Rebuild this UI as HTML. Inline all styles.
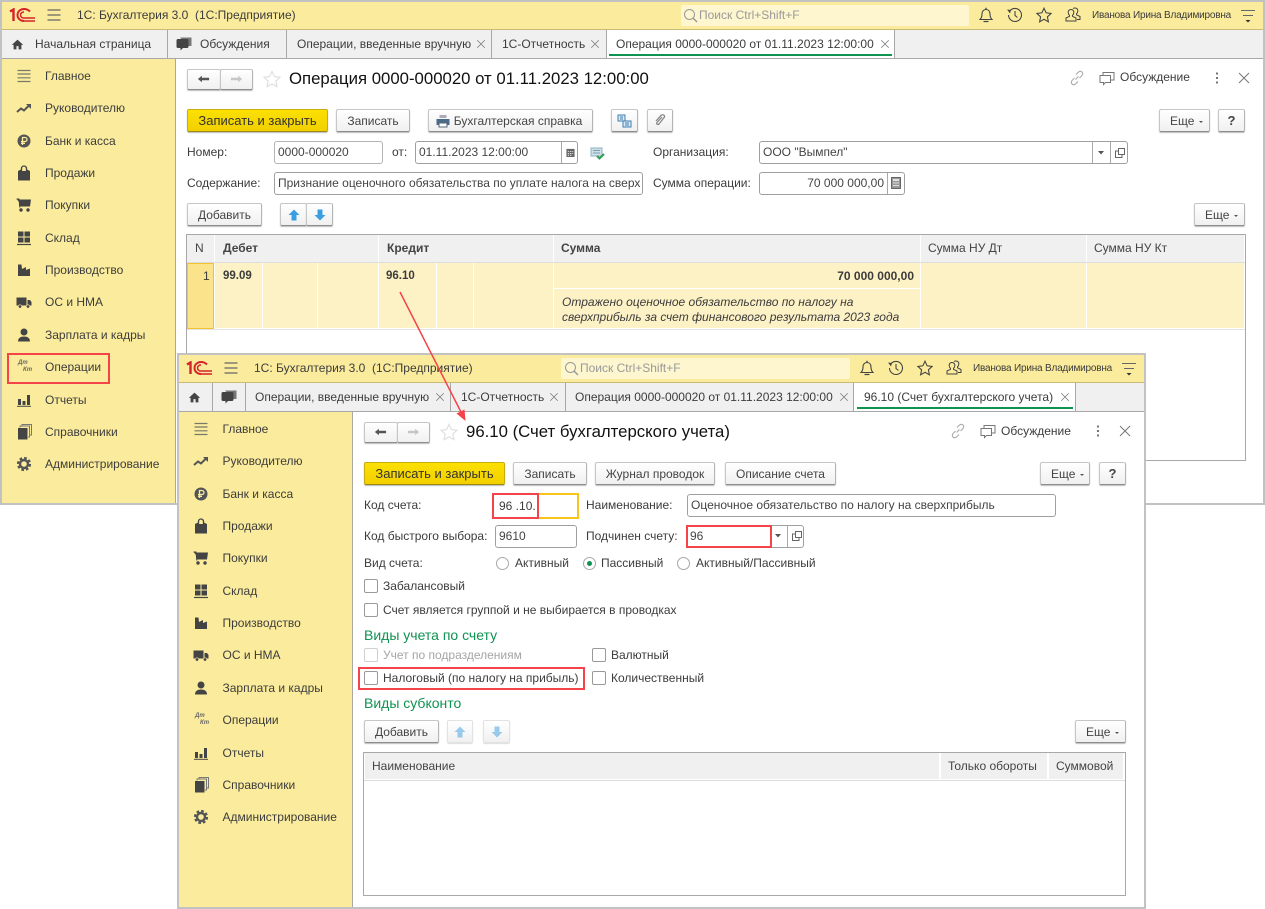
<!DOCTYPE html>
<html lang="ru"><head><meta charset="utf-8"><title>1С</title>
<style>
html,body{margin:0;padding:0;background:#fff}
body{width:1265px;height:909px;position:relative;overflow:hidden;font:12px/14px "Liberation Sans",Arial,sans-serif;color:#3c3c3c}
div,span,svg{position:absolute;box-sizing:border-box}
span{white-space:nowrap}
.w{background:#fff;border:2px solid #c2c2c2}
.h{background:#fbec9d}
.tb{background:#f0f0f0}
.l{background:#a8a8a8}
.b{border:1px solid #c6c6c6;border-bottom-color:#8d8d8d;border-right-color:#b5b5b5;border-radius:2px;background:linear-gradient(#fff,#f0f0f0);box-shadow:0 1px 1px #bbb;text-align:center;line-height:22px;white-space:nowrap;color:#444}
.y{background:linear-gradient(#fbe000,#f2d000);border-color:#c9ad10;border-bottom-color:#9c8a10;color:#333;font-size:13px}
.d{border-color:#e2e2e2;box-shadow:0 1px 1px #ddd}
.m{text-align:left;padding-left:10px}
.ca{position:static;display:inline-block;border-left:2px solid transparent;border-right:2px solid transparent;border-top:2px solid #555;margin-left:5px;vertical-align:middle}
.i{border:1px solid #b4b4b4;border-radius:3px;background:#fff;line-height:21px;padding-left:3px;white-space:nowrap;overflow:hidden;color:#444}
.c{width:14px;height:14px;border:1px solid #9a9a9a;border-radius:2px;background:#fff}
.r{width:13px;height:13px;border:1px solid #a8a8a8;border-radius:50%;background:#fff}
.sec{font-size:14px;color:#0e9350}
.red{border:2px solid #f4444a;background:transparent}
.g{color:#a5a5a5}
.dk{font:italic bold 6px/7px "Liberation Sans",sans-serif;color:#666}
.nm{font-size:10px;letter-spacing:-.2px}
.ti{font-size:16.750px;line-height:20px;color:#111}
.cell{background:#fdf1c6}
.th{background:#f0f0f0;line-height:26px;padding-left:8px;color:#444;white-space:nowrap}
svg{overflow:visible}
</style></head><body>
<svg width="0" height="0" style="left:0;top:0">
<defs>
<symbol id="menu" viewBox="0 0 16 16"><path d="M1.500 2.500h13M1.500 6h13M1.500 9.800h13M1.500 13.500h13" stroke="#77776a" stroke-width="1.200" fill="none"/></symbol>
<symbol id="ham" viewBox="0 0 16 16"><path d="M1.500 3h13M1.500 8h13M1.500 13h13" stroke="#666" stroke-width="1.300" fill="none"/></symbol>
<symbol id="trend" viewBox="0 0 16 16"><path d="M1 12l4-3.500 3 2 5-5" stroke="#555" stroke-width="2" fill="none"/><path d="M10 4h5v5z" fill="#555"/></symbol>
<symbol id="coin" viewBox="0 0 16 16"><circle cx="8" cy="8" r="6.500" fill="#555"/><path d="M6.500 12V4.500h2.500a2 2 0 010 4H5M5 10.300h4" stroke="#fbec9d" stroke-width="1.300" fill="none"/></symbol>
<symbol id="bag" viewBox="0 0 16 16"><path d="M2 6h12v9.500H2z" fill="#444"/><path d="M5.500 8V3.500a2.500 2.500 0 015 0V8" stroke="#444" stroke-width="1.300" fill="none"/><path d="M2 6l3-1.500v1.500zM14 6l-3-1.500v1.500z" fill="#444"/></symbol>
<symbol id="cart" viewBox="0 0 16 16"><path d="M1 2.500h14l-1 7H3.500L3 5z" fill="#444"/><path d="M.5 2h2.500l.8 8.500" stroke="#444" fill="none"/><circle cx="5" cy="13" r="1.700" fill="#444"/><circle cx="12" cy="13" r="1.700" fill="#444"/></symbol>
<symbol id="grid" viewBox="0 0 16 16"><path d="M2 1.500h5.500v5H2zM8.500 1.500H14v5H8.500zM2 7.500h5.500v5H2zM8.500 7.500H14v5H8.500z" fill="#444"/><path d="M1 14.500h14" stroke="#444" stroke-width="1.200"/></symbol>
<symbol id="fact" viewBox="0 0 16 16"><path d="M2 14V2.500h3.500L6 7l4-2v3l4-1.500V14z" fill="#444"/></symbol>
<symbol id="truck" viewBox="0 0 16 16"><path d="M0.500 3.500h10v8h-10zM11.500 6h2.500l1.500 2v3.500h-4z" fill="#444"/><circle cx="4" cy="12.500" r="1.700" fill="#444" stroke="#fbec9d" stroke-width=".6"/><circle cx="12" cy="12.500" r="1.700" fill="#444" stroke="#fbec9d" stroke-width=".6"/></symbol>
<symbol id="user" viewBox="0 0 16 16"><circle cx="8" cy="5" r="3.500" fill="#444"/><path d="M2 14.500c0-3.500 2.500-5 6-5s6 1.500 6 5z" fill="#444"/></symbol>
<symbol id="chart" viewBox="0 0 16 16"><path d="M2 7h3v6H2zM6.500 9h3v4h-3zM11 3h3v10h-3z" fill="#444"/><path d="M1 14.300h14" stroke="#444"/></symbol>
<symbol id="book" viewBox="0 0 16 16"><path d="M2 4h9.500v11.500H2z" fill="#444"/><path d="M4 3.500V2h9.500v11H12M6 1.500V.5h9.500v10.500H14" stroke="#777" fill="none"/></symbol>
<symbol id="gear" viewBox="0 0 16 16"><circle cx="8" cy="8" r="4" fill="none" stroke="#555" stroke-width="2.400"/><circle cx="8" cy="8" r="6" fill="none" stroke="#555" stroke-width="2.200" stroke-dasharray="2.700 2"/></symbol>
<symbol id="home" viewBox="0 0 16 16"><path d="M8 2L1 8.500h2.200V14h3.500v-4h2.600v4h3.500V8.500H15z" fill="#444"/></symbol>
<symbol id="chat" viewBox="0 0 16 16"><path d="M4 1.500h11.500v8.500H12z" fill="#777"/><path d="M.5 4.500C.5 3.500 1 3 2 3h9c1 0 1.500.5 1.500 1.500v6c0 1-.5 1.500-1.500 1.500H7l-2.500 2.500V12H2C1 12 .5 11.500.5 10.500z" fill="#444"/></symbol>
<symbol id="chat2" viewBox="0 0 16 16"><path d="M1 5.500h10.500v7H6.500l-2 2v-2H1z" fill="#fff" stroke="#777"/><path d="M4 5V2.500h11V10h-3" fill="none" stroke="#777"/></symbol>
<symbol id="bell" viewBox="0 0 16 16"><path d="M2 12.500c1.500-1.500 2-3 2-5.500 0-3 1.800-4.500 4-4.500s4 1.500 4 4.500c0 2.500.5 4 2 5.500z" fill="none" stroke="#444" stroke-width="1.100"/><path d="M8 .8v1.700M5.500 14.500h5" stroke="#444" stroke-width="1.300"/></symbol>
<symbol id="hist" viewBox="0 0 16 16"><path d="M2.500 4.500A6.500 6.500 0 111.500 8" fill="none" stroke="#444" stroke-width="1.100"/><path d="M0 2.500l4 .5-1 3.500z" fill="#444"/><path d="M8 4v4.500l2.500 2" fill="none" stroke="#444" stroke-width="1.100"/></symbol>
<symbol id="star" viewBox="0 0 16 16"><path d="M8 1.200l2.100 4.600 5 .6-3.700 3.400 1 5L8 12.300l-4.400 2.500 1-5L.9 6.400l5-.6z" fill="none" stroke="#444" stroke-width="1.100"/></symbol>
<symbol id="star2" viewBox="0 0 16 16"><path d="M8 1.200l2.100 4.600 5 .6-3.700 3.400 1 5L8 12.300l-4.400 2.500 1-5L.9 6.400l5-.6z" fill="#fff" stroke="#dedede" stroke-width="1"/></symbol>
<symbol id="ppl" viewBox="0 0 16 16"><path d="M6 2.500c-2 0-3 1.500-2.800 3.300.1 1 .6 2 1.300 2.500v1L1 11v3h10v-3L7.500 9.300v-1c.7-.5 1.200-1.500 1.300-2.500C9 4 8 2.500 6 2.500z" fill="none" stroke="#444"/><path d="M8 1.500c.6-.4 1.300-.6 2-.5 2 0 3 1.500 2.800 3.300-.1 1-.6 2-1.300 2.500v1l3.500 1.700v3h-3" fill="none" stroke="#444"/></symbol>
<symbol id="rm" viewBox="0 0 16 16"><path d="M1 2.500h14M3 7.500h10" stroke="#666" fill="none"/><path d="M5.500 12h5L8 14.500z" fill="#333"/></symbol>
<symbol id="logo" viewBox="0 0 26 14"><path d="M1 3.500L4.500 1.500V13" fill="none" stroke="#d5232b" stroke-width="2.400"/><path d="M21 3.500C19.500 2 17.500 1 15 1 11.500 1 8.500 3.500 8.500 7s3 6 6.500 6" fill="none" stroke="#d5232b" stroke-width="2"/><path d="M15 4c-2 0-3.500 1.300-3.500 3s1.500 3 3.500 3h11M15 13h11" fill="none" stroke="#d5232b" stroke-width="1.500"/></symbol>
<symbol id="link" viewBox="0 0 16 16"><path d="M6.500 9.500l3-3M7 4.500l2-2c1.500-1.500 3-1.500 4-.5s1 2.500-.5 4l-2 2M9 11.500l-2 2c-1.500 1.500-3 1.500-4 .5s-1-2.500.5-4l2-2" fill="none" stroke="#aaa" stroke-width="1.100"/></symbol>
<symbol id="xx" viewBox="0 0 16 16"><path d="M3 3l10 10M13 3L3 13" stroke="#777" stroke-width="1"/></symbol>
<symbol id="dots" viewBox="0 0 16 16"><path d="M8 2.500v2M8 7v2M8 11.500v2" stroke="#666" stroke-width="1.800"/></symbol>
<symbol id="back" viewBox="0 0 16 10"><path d="M1 5l5-4v2.500h9v3H6V9z" fill="#555"/></symbol>
<symbol id="fwd" viewBox="0 0 16 10"><path d="M15 5l-5-4v2.500H1v3h9V9z" fill="#c6c6c6"/></symbol>
<symbol id="up" viewBox="0 0 12 12"><path d="M6 .5L11.500 6H8.500v5.500h-5V6H.5z" fill="#3b9ee0"/></symbol>
<symbol id="dn" viewBox="0 0 12 12"><path d="M6 11.500L.5 6h3V.5h5V6h3z" fill="#3b9ee0"/></symbol>
<symbol id="open" viewBox="0 0 10 10"><path d="M3.500.5h6v6h-6zM3 3H.5v6.500H7V7" fill="none" stroke="#666"/></symbol>
<symbol id="cal" viewBox="0 0 10 10"><path d="M.5 1h9v9h-9z" fill="#666"/><path d="M2 4h1.500M4.500 4H6M7 4h1M2 6h1.500M4.500 6H6M7 6h1M2 8h1.500M4.500 8H6" stroke="#fff" stroke-width=".9"/></symbol>
<symbol id="calc" viewBox="0 0 10 12"><path d="M.5.500h9v11h-9z" fill="#999" stroke="#666"/><path d="M2 3h6" stroke="#fff" stroke-width="1.400"/><path d="M2 6h6M2 8.500h6" stroke="#ddd"/></symbol>
</defs></svg>

<!-- WINDOW 1 -->
<div class="w" style="left:0;top:0;width:1265px;height:505px"></div>
<div class="h" style="left:2px;top:2px;width:1261px;height:28px;border-bottom:1px solid #c9bb74"></div>
<svg style="left:9px;top:8px" width="26" height="14"><use href="#logo"/></svg>
<svg style="left:46px;top:7px" width="16" height="16"><use href="#ham"/></svg>
<span style="left:77px;top:8px">1С: Бухгалтерия 3.0&nbsp; (1С:Предприятие)</span>
<div style="left:681px;top:5px;width:288px;height:21px;background:#fdf6cf;border-radius:2px"></div>
<svg style="left:683px;top:8px" width="15" height="15" viewBox="0 0 15 15"><circle cx="6.500" cy="6.500" r="5" fill="none" stroke="#999"/><path d="M10 10l4 4" stroke="#999" stroke-width="1.500"/></svg>
<span style="left:699px;top:8px;color:#999">Поиск Ctrl+Shift+F</span>
<svg style="left:978px;top:7px" width="16" height="16"><use href="#bell"/></svg>
<svg style="left:1007px;top:7px" width="16" height="16"><use href="#hist"/></svg>
<svg style="left:1036px;top:7px" width="16" height="16"><use href="#star"/></svg>
<svg style="left:1065px;top:7px" width="16" height="16"><use href="#ppl"/></svg>
<span class="nm" style="left:1092px;top:9px">Иванова Ирина Владимировна</span>
<svg style="left:1240px;top:8px" width="16" height="16"><use href="#rm"/></svg>
<!-- tabs 1 -->
<div class="tb" style="left:2px;top:30px;width:1261px;height:29px;border-bottom:1px solid #a8a8a8"></div>
<div class="l" style="left:167px;top:30px;width:1px;height:28px"></div>
<div class="l" style="left:286px;top:30px;width:1px;height:28px"></div>
<div class="l" style="left:491px;top:30px;width:1px;height:28px"></div>
<div class="l" style="left:606px;top:30px;width:1px;height:28px"></div>
<div style="left:607px;top:30px;width:287px;height:28px;background:#fff"></div>
<div class="l" style="left:894px;top:30px;width:1px;height:28px"></div>
<div style="left:609px;top:54px;width:283px;height:2px;background:#0e9350"></div>
<svg style="left:11px;top:38px" width="13" height="13"><use href="#home"/></svg>
<span style="left:35px;top:37px">Начальная страница</span>
<svg style="left:176px;top:36px" width="16" height="16"><use href="#chat"/></svg>
<span style="left:200px;top:37px">Обсуждения</span>
<span style="left:297px;top:37px">Операции, введенные вручную</span>
<svg style="left:475px;top:38px" width="12" height="12"><use href="#xx"/></svg>
<span style="left:502px;top:37px">1С-Отчетность</span>
<svg style="left:589px;top:38px" width="12" height="12"><use href="#xx"/></svg>
<span style="left:616px;top:37px">Операция 0000-000020 от 01.11.2023 12:00:00</span>
<svg style="left:879px;top:38px" width="12" height="12"><use href="#xx"/></svg>
<!-- sidebar 1 -->
<div class="h" style="left:2px;top:59px;width:174px;height:444px;border-right:1px solid #a9a9a0"></div>
<svg style="left:16px;top:68px" width="16" height="16"><use href="#menu"/></svg><span style="left:45px;top:69px">Главное</span>
<svg style="left:16px;top:100px" width="16" height="16"><use href="#trend"/></svg><span style="left:45px;top:101px">Руководителю</span>
<svg style="left:16px;top:133px" width="16" height="16"><use href="#coin"/></svg><span style="left:45px;top:134px">Банк и касса</span>
<svg style="left:16px;top:165px" width="16" height="16"><use href="#bag"/></svg><span style="left:45px;top:166px">Продажи</span>
<svg style="left:16px;top:197px" width="16" height="16"><use href="#cart"/></svg><span style="left:45px;top:198px">Покупки</span>
<svg style="left:16px;top:230px" width="16" height="16"><use href="#grid"/></svg><span style="left:45px;top:231px">Склад</span>
<svg style="left:16px;top:262px" width="16" height="16"><use href="#fact"/></svg><span style="left:45px;top:263px">Производство</span>
<svg style="left:16px;top:294px" width="16" height="16"><use href="#truck"/></svg><span style="left:45px;top:295px">ОС и НМА</span>
<svg style="left:16px;top:327px" width="16" height="16"><use href="#user"/></svg><span style="left:45px;top:328px">Зарплата и кадры</span>
<span class="dk" style="left:18px;top:360px">Дт</span><span class="dk" style="left:23px;top:367px">Кт</span><span style="left:45px;top:360px">Операции</span>
<svg style="left:16px;top:392px" width="16" height="16"><use href="#chart"/></svg><span style="left:45px;top:393px">Отчеты</span>
<svg style="left:16px;top:424px" width="16" height="16"><use href="#book"/></svg><span style="left:45px;top:425px">Справочники</span>
<svg style="left:16px;top:456px" width="16" height="16"><use href="#gear"/></svg><span style="left:45px;top:457px">Администрирование</span>
<div class="red" style="left:7px;top:353px;width:103px;height:31px"></div>
<!-- content 1 -->
<div class="b" style="left:187px;top:69px;width:34px;height:21px"></div><div class="b" style="left:220px;top:69px;width:33px;height:21px"></div>
<svg style="left:197px;top:75px" width="13" height="8"><use href="#back"/></svg>
<svg style="left:230px;top:75px" width="13" height="8"><use href="#fwd"/></svg>
<svg style="left:263px;top:70px" width="18" height="18"><use href="#star2"/></svg>
<span class="ti" style="left:289px;top:69px">Операция 0000-000020 от 01.11.2023 12:00:00</span>
<svg style="left:1069px;top:70px" width="16" height="16"><use href="#link"/></svg>
<svg style="left:1099px;top:70px" width="16" height="16"><use href="#chat2"/></svg>
<span style="left:1120px;top:70px">Обсуждение</span>
<svg style="left:1209px;top:70px" width="16" height="16"><use href="#dots"/></svg>
<svg style="left:1236px;top:70px" width="16" height="16"><use href="#xx"/></svg>
<div class="b y" style="left:187px;top:109px;width:141px;height:23px">Записать и закрыть</div>
<div class="b" style="left:336px;top:109px;width:74px;height:23px">Записать</div>
<div class="b" style="left:428px;top:109px;width:165px;height:23px;padding-left:15px">Бухгалтерская справка</div>
<svg style="left:436px;top:114px" width="14" height="14" viewBox="0 0 14 14"><path d="M3.500 1h7v3h-7z" fill="#aab"/><path d="M.5 5h13v6h-13z" fill="#4a6a8a"/><path d="M3 9h8v4H3z" fill="#fff" stroke="#567"/></svg>
<div class="b" style="left:611px;top:109px;width:27px;height:23px"></div>
<svg style="left:617px;top:114px" width="15" height="14" viewBox="0 0 15 14"><path d="M1 1h7v6H1zM6 7h8v6H6z" fill="#dbe9f5" stroke="#3f7fb0"/><path d="M3 3h3M3 5h3M8 9h4M8 11h4" stroke="#3f7fb0"/></svg>
<div class="b" style="left:647px;top:109px;width:26px;height:23px"></div>
<svg style="left:653px;top:113px" width="14" height="14" viewBox="0 0 14 14"><path d="M3 8l5-5.500c1.500-1.500 4-.5 3.500 1.500L6 11c-1.200 1.200-3 0-2-1.500L9 4" fill="none" stroke="#888" stroke-width="1.300"/></svg>
<div class="b m" style="left:1159px;top:109px;width:51px;height:23px">Еще<span class="ca"></span></div>
<div class="b" style="left:1218px;top:109px;width:27px;height:23px;font-weight:bold;font-size:13px">?</div>
<span style="left:187px;top:145px">Номер:</span>
<div class="i" style="left:274px;top:141px;width:109px;height:23px">0000-000020</div>
<span style="left:392px;top:145px">от:</span>
<div class="i" style="left:415px;top:141px;width:163px;height:23px;border-color:#a0a0a0">01.11.2023 12:00:00</div>
<div class="l" style="left:561px;top:142px;width:1px;height:21px"></div>
<svg style="left:566px;top:148px" width="9" height="9"><use href="#cal"/></svg>
<svg style="left:590px;top:147px" width="15" height="13" viewBox="0 0 15 13"><path d="M1 1h11v8H1z" fill="#cfe0ea" stroke="#8fb0c0"/><path d="M3 3.500h7M3 6h7" stroke="#7f9fb0"/><path d="M7 9l2.500 2.500L14 7" fill="none" stroke="#2aa050" stroke-width="2"/></svg>
<span style="left:653px;top:145px">Организация:</span>
<div class="i" style="left:759px;top:141px;width:369px;height:23px;border-color:#a0a0a0">ООО "Вымпел"</div>
<div class="l" style="left:1092px;top:142px;width:1px;height:21px"></div>
<div class="l" style="left:1110px;top:142px;width:1px;height:21px"></div>
<svg style="left:1098px;top:151px" width="6" height="4" viewBox="0 0 6 4"><path d="M0 0h6L3 3.500z" fill="#555"/></svg>
<svg style="left:1115px;top:148px" width="10" height="10"><use href="#open"/></svg>
<span style="left:187px;top:176px">Содержание:</span>
<div class="i" style="left:274px;top:172px;width:369px;height:23px;border-color:#a0a0a0">Признание оценочного обязательства по уплате налога на сверх</div>
<span style="left:653px;top:176px">Сумма операции:</span>
<div class="i" style="left:759px;top:172px;width:146px;height:23px;border-color:#a0a0a0;text-align:right;padding-right:20px">70 000 000,00</div>
<div class="l" style="left:887px;top:173px;width:1px;height:21px"></div>
<svg style="left:891px;top:177px" width="10" height="12"><use href="#calc"/></svg>
<div class="b" style="left:187px;top:203px;width:75px;height:23px">Добавить</div>
<div class="b" style="left:280px;top:203px;width:27px;height:23px"></div><div class="b" style="left:306px;top:203px;width:27px;height:23px"></div>
<svg style="left:288px;top:209px" width="12" height="12"><use href="#up"/></svg>
<svg style="left:314px;top:209px" width="12" height="12"><use href="#dn"/></svg>
<div class="b m" style="left:1194px;top:203px;width:51px;height:23px">Еще<span class="ca"></span></div>
<!-- table 1 -->
<div style="left:186px;top:234px;width:1060px;height:227px;border:1px solid #a8a8a8;background:#fff"></div>
<div class="th" style="left:187px;top:235px;width:27px;height:27px;padding-left:8px">N</div>
<div class="th" style="left:215px;top:235px;width:163px;height:27px;font-weight:bold">Дебет</div>
<div class="th" style="left:379px;top:235px;width:174px;height:27px;font-weight:bold">Кредит</div>
<div class="th" style="left:554px;top:235px;width:366px;height:27px;font-weight:bold;padding-left:7px">Сумма</div>
<div class="th" style="left:921px;top:235px;width:165px;height:27px;padding-left:7px">Сумма НУ Дт</div>
<div class="th" style="left:1087px;top:235px;width:157px;height:27px;padding-left:7px">Сумма НУ Кт</div>
<div style="left:187px;top:262px;width:1058px;height:1px;background:#ddd"></div>
<div style="left:187px;top:263px;width:27px;height:66px;background:#fbe38c;border:1px solid #f2c230"></div>
<span style="left:203px;top:269px;font-size:12px">1</span>
<div class="cell" style="left:215px;top:263px;width:47px;height:65px"></div>
<div class="cell" style="left:263px;top:263px;width:54px;height:65px"></div>
<div class="cell" style="left:318px;top:263px;width:60px;height:65px"></div>
<div class="cell" style="left:379px;top:263px;width:57px;height:65px"></div>
<div class="cell" style="left:437px;top:263px;width:36px;height:65px"></div>
<div class="cell" style="left:474px;top:263px;width:79px;height:65px"></div>
<div class="cell" style="left:554px;top:263px;width:366px;height:25px"></div>
<div class="cell" style="left:554px;top:289px;width:366px;height:39px"></div>
<div class="cell" style="left:921px;top:263px;width:165px;height:65px"></div>
<div class="cell" style="left:1087px;top:263px;width:157px;height:65px"></div>
<div style="left:187px;top:329px;width:1058px;height:1px;background:#e2e2e2"></div>
<span style="left:223px;top:269px;font-weight:bold;font-size:11.500px">99.09</span>
<span style="left:386px;top:269px;font-weight:bold;font-size:11.500px">96.10</span>
<span style="right:351px;top:269px;font-weight:bold;font-size:12px">70 000 000,00</span>
<span style="left:562px;top:295px;font-style:italic">Отражено оценочное обязательство по налогу на</span>
<span style="left:562px;top:310px;font-style:italic">сверхприбыль за счет финансового результата 2023 года</span>

<!-- WINDOW 2 -->
<div class="w" style="left:177px;top:353px;width:969px;height:556px"></div>
<div class="h" style="left:179px;top:355px;width:965px;height:28px;border-bottom:1px solid #c9bb74"></div>
<svg style="left:186px;top:361px" width="26" height="14"><use href="#logo"/></svg>
<svg style="left:223px;top:360px" width="16" height="16"><use href="#ham"/></svg>
<span style="left:254px;top:361px">1С: Бухгалтерия 3.0&nbsp; (1С:Предприятие)</span>
<div style="left:561px;top:358px;width:289px;height:21px;background:#fdf6cf;border-radius:2px"></div>
<svg style="left:564px;top:361px" width="15" height="15" viewBox="0 0 15 15"><circle cx="6.500" cy="6.500" r="5" fill="none" stroke="#999"/><path d="M10 10l4 4" stroke="#999" stroke-width="1.500"/></svg>
<span style="left:580px;top:361px;color:#999">Поиск Ctrl+Shift+F</span>
<svg style="left:859px;top:360px" width="16" height="16"><use href="#bell"/></svg>
<svg style="left:888px;top:360px" width="16" height="16"><use href="#hist"/></svg>
<svg style="left:917px;top:360px" width="16" height="16"><use href="#star"/></svg>
<svg style="left:946px;top:360px" width="16" height="16"><use href="#ppl"/></svg>
<span class="nm" style="left:973px;top:362px">Иванова Ирина Владимировна</span>
<svg style="left:1121px;top:361px" width="16" height="16"><use href="#rm"/></svg>
<!-- tabs 2 -->
<div class="tb" style="left:179px;top:383px;width:965px;height:29px;border-bottom:1px solid #a8a8a8"></div>
<div class="l" style="left:212px;top:383px;width:1px;height:28px"></div>
<div class="l" style="left:245px;top:383px;width:1px;height:28px"></div>
<div class="l" style="left:450px;top:383px;width:1px;height:28px"></div>
<div class="l" style="left:565px;top:383px;width:1px;height:28px"></div>
<div class="l" style="left:853px;top:383px;width:1px;height:28px"></div>
<div style="left:854px;top:383px;width:221px;height:28px;background:#fff"></div>
<div class="l" style="left:1075px;top:383px;width:1px;height:28px"></div>
<div style="left:857px;top:407px;width:216px;height:2px;background:#0e9350"></div>
<svg style="left:188px;top:391px" width="13" height="13"><use href="#home"/></svg>
<svg style="left:221px;top:389px" width="16" height="16"><use href="#chat"/></svg>
<span style="left:255px;top:390px">Операции, введенные вручную</span>
<svg style="left:434px;top:391px" width="12" height="12"><use href="#xx"/></svg>
<span style="left:461px;top:390px">1С-Отчетность</span>
<svg style="left:548px;top:391px" width="12" height="12"><use href="#xx"/></svg>
<span style="left:575px;top:390px">Операция 0000-000020 от 01.11.2023 12:00:00</span>
<svg style="left:838px;top:391px" width="12" height="12"><use href="#xx"/></svg>
<span style="left:864px;top:390px">96.10 (Счет бухгалтерского учета)</span>
<svg style="left:1059px;top:391px" width="12" height="12"><use href="#xx"/></svg>
<!-- sidebar 2 -->
<div class="h" style="left:179px;top:412px;width:174px;height:495px;border-right:1px solid #a9a9a0"></div>
<svg style="left:193px;top:421px" width="16" height="16"><use href="#menu"/></svg><span style="left:222.500px;top:422px">Главное</span>
<svg style="left:193px;top:453px" width="16" height="16"><use href="#trend"/></svg><span style="left:222.500px;top:454px">Руководителю</span>
<svg style="left:193px;top:486px" width="16" height="16"><use href="#coin"/></svg><span style="left:222.500px;top:487px">Банк и касса</span>
<svg style="left:193px;top:518px" width="16" height="16"><use href="#bag"/></svg><span style="left:222.500px;top:519px">Продажи</span>
<svg style="left:193px;top:550px" width="16" height="16"><use href="#cart"/></svg><span style="left:222.500px;top:551px">Покупки</span>
<svg style="left:193px;top:583px" width="16" height="16"><use href="#grid"/></svg><span style="left:222.500px;top:584px">Склад</span>
<svg style="left:193px;top:615px" width="16" height="16"><use href="#fact"/></svg><span style="left:222.500px;top:616px">Производство</span>
<svg style="left:193px;top:647px" width="16" height="16"><use href="#truck"/></svg><span style="left:222.500px;top:648px">ОС и НМА</span>
<svg style="left:193px;top:680px" width="16" height="16"><use href="#user"/></svg><span style="left:222.500px;top:681px">Зарплата и кадры</span>
<span class="dk" style="left:195px;top:713px">Дт</span><span class="dk" style="left:200px;top:720px">Кт</span><span style="left:222.500px;top:713px">Операции</span>
<svg style="left:193px;top:745px" width="16" height="16"><use href="#chart"/></svg><span style="left:222.500px;top:746px">Отчеты</span>
<svg style="left:193px;top:777px" width="16" height="16"><use href="#book"/></svg><span style="left:222.500px;top:778px">Справочники</span>
<svg style="left:193px;top:809px" width="16" height="16"><use href="#gear"/></svg><span style="left:222.500px;top:810px">Администрирование</span>
<!-- content 2 -->
<div class="b" style="left:364px;top:422px;width:34px;height:21px"></div><div class="b" style="left:397px;top:422px;width:33px;height:21px"></div>
<svg style="left:374px;top:428px" width="13" height="8"><use href="#back"/></svg>
<svg style="left:407px;top:428px" width="13" height="8"><use href="#fwd"/></svg>
<svg style="left:440px;top:423px" width="18" height="18"><use href="#star2"/></svg>
<span class="ti" style="left:466px;top:422px">96.10 (Счет бухгалтерского учета)</span>
<svg style="left:950px;top:423px" width="16" height="16"><use href="#link"/></svg>
<svg style="left:980px;top:423px" width="16" height="16"><use href="#chat2"/></svg>
<span style="left:1001px;top:424px">Обсуждение</span>
<svg style="left:1090px;top:423px" width="16" height="16"><use href="#dots"/></svg>
<svg style="left:1117px;top:423px" width="16" height="16"><use href="#xx"/></svg>
<div class="b y" style="left:364px;top:462px;width:141px;height:23px">Записать и закрыть</div>
<div class="b" style="left:513px;top:462px;width:74px;height:23px">Записать</div>
<div class="b" style="left:595px;top:462px;width:120px;height:23px">Журнал проводок</div>
<div class="b" style="left:725px;top:462px;width:111px;height:23px">Описание счета</div>
<div class="b m" style="left:1040px;top:462px;width:50px;height:23px">Еще<span class="ca"></span></div>
<div class="b" style="left:1099px;top:462px;width:27px;height:23px;font-weight:bold;font-size:13px">?</div>
<span style="left:364px;top:498px">Код счета:</span>
<div style="left:492px;top:493px;width:87px;height:26px;border:2px solid #f8c51c;border-left:0"></div>
<span style="left:499px;top:499px">96 .10.</span>
<div class="red" style="left:492px;top:493px;width:47px;height:26px"></div>
<span style="left:586px;top:498px">Наименование:</span>
<div class="i" style="left:687px;top:494px;width:369px;height:23px;border-color:#a0a0a0">Оценочное обязательство по налогу на сверхприбыль</div>
<span style="left:364px;top:529px">Код быстрого выбора:</span>
<div class="i" style="left:495px;top:525px;width:82px;height:23px;border-color:#a0a0a0">9610</div>
<span style="left:586px;top:529px">Подчинен счету:</span>
<div class="i" style="left:686px;top:525px;width:118px;height:23px;border-color:#a0a0a0">96</div>
<div class="l" style="left:787px;top:526px;width:1px;height:21px"></div>
<svg style="left:775px;top:534px" width="6" height="4" viewBox="0 0 6 4"><path d="M0 0h6L3 3.500z" fill="#555"/></svg>
<svg style="left:792px;top:531px" width="10" height="10"><use href="#open"/></svg>
<div class="red" style="left:686px;top:525px;width:86px;height:23px"></div>
<span style="left:364px;top:556px">Вид счета:</span>
<div class="r" style="left:496px;top:557px"></div><span style="left:515px;top:556px">Активный</span>
<div class="r" style="left:583px;top:557px"></div><div style="left:587px;top:561px;width:5px;height:5px;border-radius:50%;background:#0e9350"></div><span style="left:601px;top:556px">Пассивный</span>
<div class="r" style="left:677px;top:557px"></div><span style="left:696px;top:556px">Активный/Пассивный</span>
<div class="c" style="left:364px;top:579px"></div><span style="left:383px;top:579px">Забалансовый</span>
<div class="c" style="left:364px;top:603px"></div><span style="left:383px;top:603px">Счет является группой и не выбирается в проводках</span>
<span class="sec" style="left:364px;top:628px">Виды учета по счету</span>
<div class="c" style="left:364px;top:648px;border-color:#d0d0d0"></div><span class="g" style="left:383px;top:648px">Учет по подразделениям</span>
<div class="c" style="left:592px;top:648px"></div><span style="left:611px;top:648px">Валютный</span>
<div class="c" style="left:364px;top:671px"></div><span style="left:383px;top:671px">Налоговый (по налогу на прибыль)</span>
<div class="c" style="left:592px;top:671px"></div><span style="left:611px;top:671px">Количественный</span>
<div class="red" style="left:358px;top:667px;width:227px;height:23px"></div>
<span class="sec" style="left:364px;top:696px">Виды субконто</span>
<div class="b" style="left:364px;top:720px;width:75px;height:23px">Добавить</div>
<div class="b d" style="left:447px;top:720px;width:26px;height:23px"></div>
<div class="b d" style="left:483px;top:720px;width:27px;height:23px"></div>
<svg style="left:454px;top:726px;opacity:.5" width="12" height="12"><use href="#up"/></svg>
<svg style="left:491px;top:726px;opacity:.5" width="12" height="12"><use href="#dn"/></svg>
<div class="b m" style="left:1075px;top:720px;width:51px;height:23px">Еще<span class="ca"></span></div>
<div style="left:363px;top:752px;width:763px;height:144px;border:1px solid #a8a8a8;background:#fff"></div>
<div class="th" style="left:365px;top:753px;width:574px;height:26px;padding-left:7px">Наименование</div>
<div class="th" style="left:941px;top:753px;width:106px;height:26px;padding-left:7px">Только обороты</div>
<div class="th" style="left:1049px;top:753px;width:74px;height:26px;padding-left:7px">Суммовой</div>
<div style="left:364px;top:780px;width:761px;height:1px;background:#ddd"></div>

<!-- arrow -->
<svg style="left:0;top:0" width="1265" height="909"><path d="M400 292L462 414" stroke="#f4444a" stroke-width="1.500" fill="none"/><path d="M465.500 421L456.500 413.500 464.500 409.500z" fill="#f4444a"/></svg>
</body></html>
